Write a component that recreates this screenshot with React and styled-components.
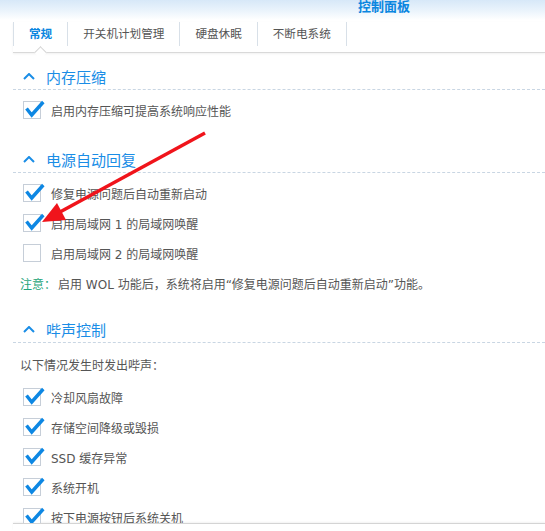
import React from "react";
import styled, { createGlobalStyle } from "styled-components";

const GlobalStyle = createGlobalStyle`
  html, body { margin: 0; padding: 0; background: #fff; }
  body {
    font-family: "DejaVu Sans", "Noto Sans CJK SC", sans-serif;
    overflow: hidden;
  }
`;

const Page = styled.div`
  position: relative;
  width: 545px;
  height: 531px;
  overflow: hidden;
  display: flex;
  flex-direction: column;
`;

const TitleBar = styled.header`
  flex: none;
  height: 20px;
  background: linear-gradient(to bottom, #d7e8f8 0%, #ebf4fc 55%, #ffffff 100%);
  display: flex;
  align-items: flex-start;
  padding-left: 358px;
`;

const Title = styled.h1`
  margin: -1px 0 0;
  font-family: "Noto Sans CJK SC", sans-serif;
  font-size: 13px;
  line-height: 13px;
  font-weight: bold;
  color: #0a86e0;
`;

const TabBar = styled.nav`
  flex: none;
  position: relative;
  margin: 2px 0 0 13px;
  padding-bottom: 6px;
  border-bottom: 1px solid #d9d9d9;
  box-shadow: 0 1px 2px rgba(0, 0, 0, 0.06);
  display: flex;
`;

const Tab = styled.div`
  height: 24px;
  line-height: 24px;
  padding: 0 15px;
  font-size: 11.6px;
  border-right: 1px solid #d8e0e8;
  &:first-child { border-left: 1px solid #d8e0e8; }
  color: ${(p) => (p.$active ? "#0a86e0" : "#555")};
  font-weight: ${(p) => (p.$active ? "bold" : "normal")};
`;

const Notch = styled.span`
  position: absolute;
  left: 23px;
  bottom: -5px;
  width: 8px;
  height: 8px;
  background: #fff;
  border-top: 1px solid #d4d4d4;
  border-left: 1px solid #d4d4d4;
  transform: rotate(45deg);
`;

const Scroll = styled.main`
  flex: 1;
  overflow: hidden;
  margin-left: 13px;
  padding-top: 10px;
`;

const Section = styled.section`
  & + & { margin-top: 21px; }
`;

const SectionHeader = styled.div`
  height: 26px;
  display: flex;
  align-items: center;
  gap: 11px;
  padding-left: 10px;
  border-bottom: 1px dashed #c9d6e3;
  color: #1a8de6;
  font-size: 15px;
  font-family: "Noto Sans CJK SC", sans-serif;
`;

const SectionBody = styled.div`
  padding-top: 5px;
`;

const Row = styled.label`
  display: flex;
  align-items: center;
  gap: 10px;
  height: 30px;
  padding-left: 10px;
  font-size: 12px;
  color: #555;
`;

const Box = styled.span`
  position: relative;
  flex: none;
  width: 16px;
  height: 16px;
  border: 1px solid #c6ced8;
  background: #fff;
`;

const CheckMark = styled.svg`
  position: absolute;
  left: -1px;
  top: -1px;
  overflow: visible;
`;

const Note = styled.p`
  margin: 7px 0 4px;
  padding-left: 7px;
  font-size: 12px;
  line-height: 20px;
  color: #555;
`;

const NoteLabel = styled.span`
  color: #1fa57a;
  margin-right: 2px;
`;

const Intro = styled.p`
  margin: 8px 0 6px;
  padding-left: 7px;
  font-size: 12px;
  line-height: 20px;
  color: #555;
`;

const Footer = styled.footer`
  flex: none;
  height: 7px;
  margin-left: 13px;
  border-top: 1px solid #d4d4d4;
  box-shadow: 0 -1px 2px rgba(0, 0, 0, 0.05);
  background: #fff;
`;

const Overlay = styled.svg`
  position: absolute;
  left: 0;
  top: 0;
  pointer-events: none;
`;

const Chevron = () => (
  <svg width="12" height="7" viewBox="0 0 12 7">
    <path d="M1 6 L6 1 L11 6" fill="none" stroke="#1a8de6" strokeWidth="2" />
  </svg>
);

const Checkbox = ({ checked, children }) => (
  <Row>
    <Box>
      {checked && (
        <CheckMark width="22" height="17" viewBox="0 0 22 17">
          <path d="M3.5 7.5 L8.7 14 L20.3 1" fill="none" stroke="#0d87e3" strokeWidth="3.4" />
        </CheckMark>
      )}
    </Box>
    <span>{children}</span>
  </Row>
);

const Group = ({ title, children }) => (
  <Section>
    <SectionHeader>
      <Chevron />
      <span>{title}</span>
    </SectionHeader>
    <SectionBody>{children}</SectionBody>
  </Section>
);

export default function App() {
  return (
    <Page>
      <GlobalStyle />
      <TitleBar>
        <Title>控制面板</Title>
      </TitleBar>
      <TabBar>
        <Tab $active>常规</Tab>
        <Tab>开关机计划管理</Tab>
        <Tab>硬盘休眠</Tab>
        <Tab>不断电系统</Tab>
        <Notch />
      </TabBar>
      <Scroll>
        <Group title="内存压缩">
          <Checkbox checked>启用内存压缩可提高系统响应性能</Checkbox>
        </Group>
        <Group title="电源自动回复">
          <Checkbox checked>修复电源问题后自动重新启动</Checkbox>
          <Checkbox checked>启用局域网 1 的局域网唤醒</Checkbox>
          <Checkbox>启用局域网 2 的局域网唤醒</Checkbox>
          <Note>
            <NoteLabel>注意：</NoteLabel>启用 WOL 功能后，系统将启用“修复电源问题后自动重新启动”功能。
          </Note>
        </Group>
        <Group title="哔声控制">
          <Intro>以下情况发生时发出哔声：</Intro>
          <Checkbox checked>冷却风扇故障</Checkbox>
          <Checkbox checked>存储空间降级或毁损</Checkbox>
          <Checkbox checked>SSD 缓存异常</Checkbox>
          <Checkbox checked>系统开机</Checkbox>
          <Checkbox checked>按下电源按钮后系统关机</Checkbox>
        </Group>
      </Scroll>
      <Footer />
      <Overlay width="545" height="531" viewBox="0 0 545 531">
        <line x1="205" y1="133" x2="60" y2="212" stroke="#f0141b" strokeWidth="3.5" />
        <polygon points="42,222 57,203 66,220" fill="#f0141b" />
      </Overlay>
    </Page>
  );
}
